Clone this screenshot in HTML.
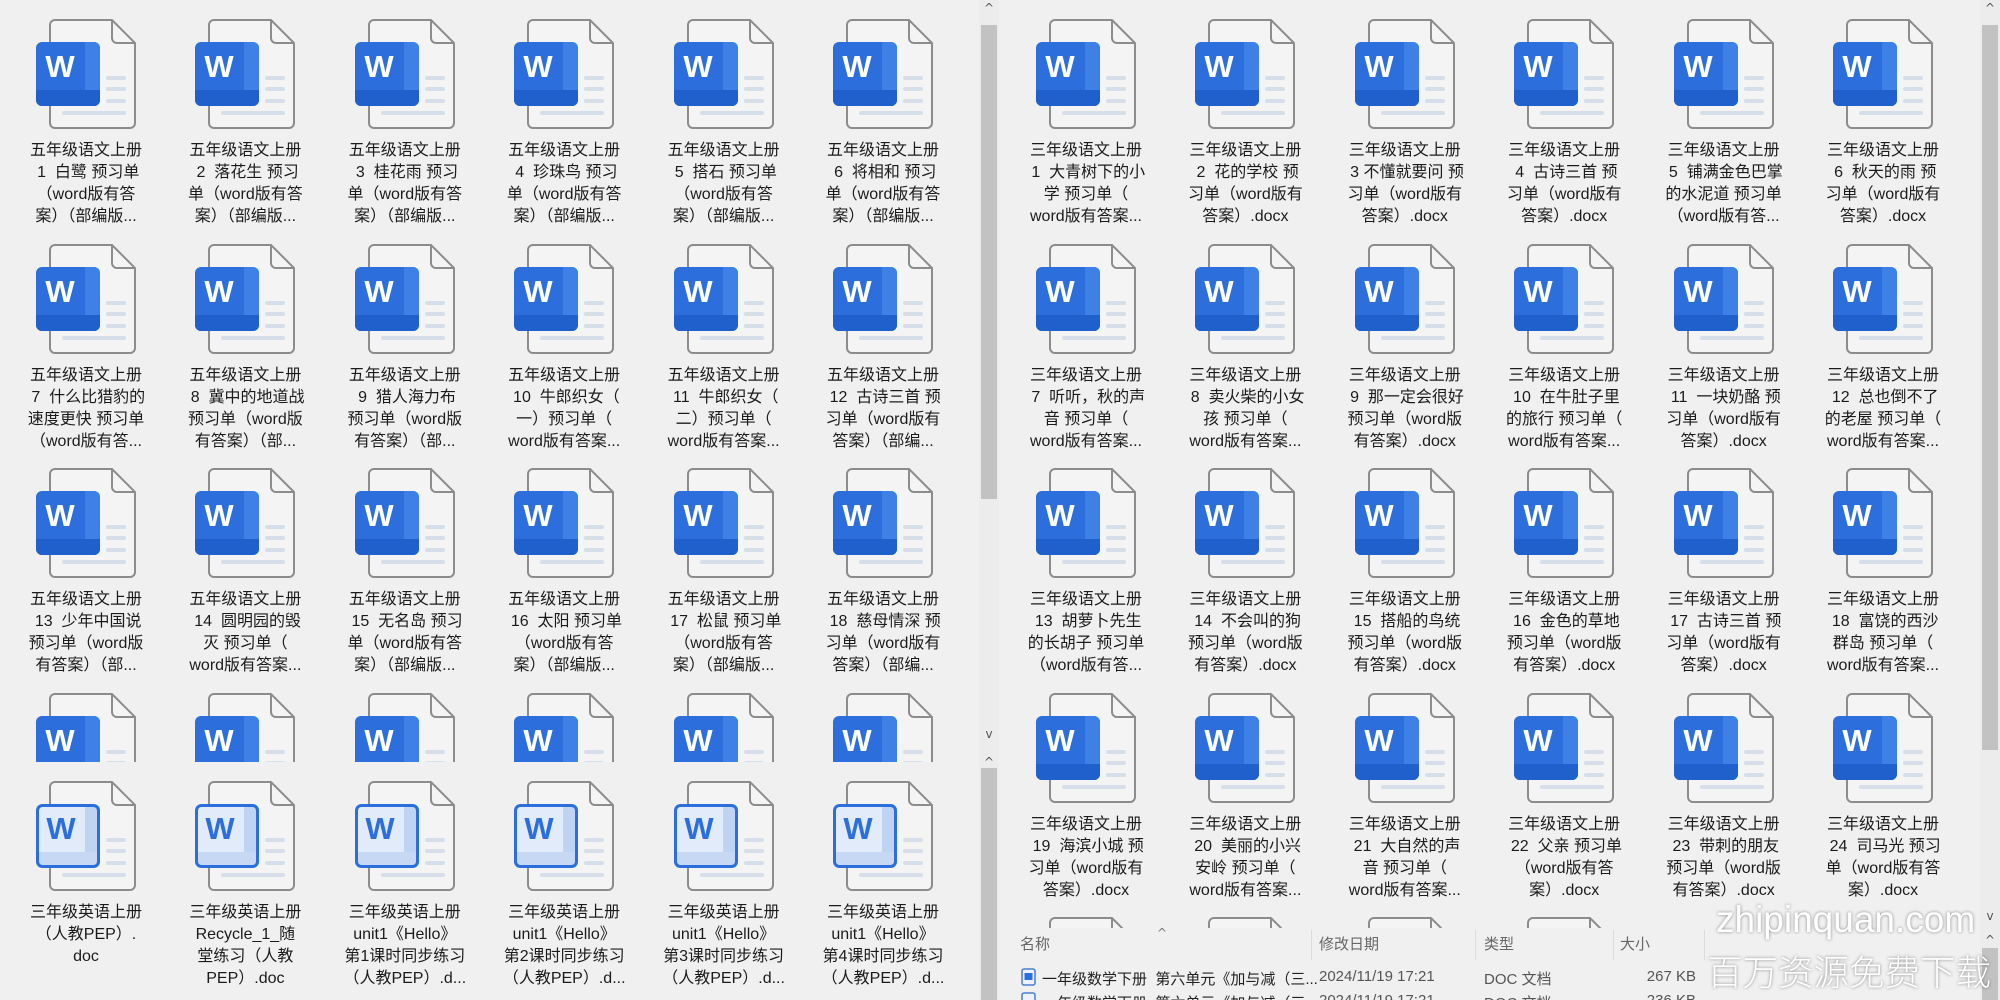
<!DOCTYPE html>
<html><head><meta charset="utf-8">
<style>
*{margin:0;padding:0;box-sizing:border-box}
html,body{width:2000px;height:1000px;overflow:hidden;background:#f0f0f0}
.box{position:absolute;overflow:hidden}
.it{position:absolute;width:150px;height:220px}
.it svg{position:absolute;left:25px;top:0;width:100px;height:110px}
.t{position:absolute;top:121px;left:0;width:150px;text-align:center;font:16px/22px "Liberation Sans","Noto Sans CJK SC",sans-serif;color:#1b1b1b;white-space:nowrap}
.sb{position:absolute;background:#ececec}
.th{position:absolute;background:#c2c2c2}
.ar{position:absolute;font:12px "DejaVu Sans",sans-serif;color:#555;width:20px;text-align:center}
.hd{position:absolute;top:5px;font:15px "Liberation Sans","Noto Sans CJK SC",sans-serif;color:#666}
.dv{position:absolute;top:2px;width:1px;height:30px;background:#dcdcdc}
.rw{position:absolute;font:15px "Liberation Sans","Noto Sans CJK SC",sans-serif;color:#222;white-space:nowrap}
</style></head><body>
<svg width="0" height="0" style="position:absolute">
<defs>
<clipPath id="cb"><rect x="0" y="23" width="64" height="64" rx="6"/></clipPath>
<symbol id="pg" viewBox="0 0 100 110">
<path d="M19 1 H76 L99 24 V104 a5 5 0 0 1 -5 5 H19 a5 5 0 0 1 -5 -5 V6 a5 5 0 0 1 5 -5Z" fill="#f4f4f4" stroke="#8c8c8c" stroke-width="2"/>
<path d="M76 1 V19 a5 5 0 0 0 5 5 H99" fill="none" stroke="#8c8c8c" stroke-width="2"/>
<rect x="70" y="57" width="20" height="4" rx="2" fill="#d6deea"/>
<rect x="70" y="68" width="20" height="4" rx="2" fill="#d6deea"/>
<rect x="70" y="80" width="20" height="4" rx="2" fill="#d6deea"/>
<rect x="26" y="92" width="64" height="4" rx="2" fill="#d6deea"/>
</symbol>
<symbol id="d" viewBox="0 0 100 110">
<use href="#pg"/>
<g clip-path="url(#cb)">
<rect x="0" y="23" width="64" height="64" fill="#2c6fdc"/>
<rect x="49" y="23" width="15" height="64" fill="#3f80e6"/>
<rect x="0" y="71" width="64" height="16" fill="#1f60cc"/>
</g>
</symbol>
<symbol id="l" viewBox="0 0 100 110">
<use href="#pg"/>
<g clip-path="url(#cb)">
<rect x="0" y="23" width="64" height="64" fill="#e1ebf9"/>
<rect x="49" y="23" width="15" height="64" fill="#bfd3f2"/>
<rect x="0" y="71" width="64" height="16" fill="#c6d8f3"/>
</g>
<rect x="1.5" y="24.5" width="61" height="61" rx="5" fill="none" stroke="#2c6fdc" stroke-width="3"/>
</symbol>
</defs></svg>

<!-- LEFT upper -->
<div class="box" style="left:0;top:0;width:979px;height:762px">
<div class="it" style="left:11px;top:19px"><svg viewBox="0 0 100 110"><use href="#d"/><text x="24" y="58" font-family="Liberation Sans" font-weight="bold" font-size="31" fill="#fff" text-anchor="middle">W</text></svg><div class="t">五年级语文上册<br>&nbsp;1&nbsp; 白鹭 预习单<br>（word版有答<br>案）（部编版...</div></div>
<div class="it" style="left:170.4px;top:19px"><svg viewBox="0 0 100 110"><use href="#d"/><text x="24" y="58" font-family="Liberation Sans" font-weight="bold" font-size="31" fill="#fff" text-anchor="middle">W</text></svg><div class="t">五年级语文上册<br>&nbsp;2&nbsp; 落花生 预习<br>单（word版有答<br>案）（部编版...</div></div>
<div class="it" style="left:329.8px;top:19px"><svg viewBox="0 0 100 110"><use href="#d"/><text x="24" y="58" font-family="Liberation Sans" font-weight="bold" font-size="31" fill="#fff" text-anchor="middle">W</text></svg><div class="t">五年级语文上册<br>&nbsp;3&nbsp; 桂花雨 预习<br>单（word版有答<br>案）（部编版...</div></div>
<div class="it" style="left:489.2px;top:19px"><svg viewBox="0 0 100 110"><use href="#d"/><text x="24" y="58" font-family="Liberation Sans" font-weight="bold" font-size="31" fill="#fff" text-anchor="middle">W</text></svg><div class="t">五年级语文上册<br>&nbsp;4&nbsp; 珍珠鸟 预习<br>单（word版有答<br>案）（部编版...</div></div>
<div class="it" style="left:648.6px;top:19px"><svg viewBox="0 0 100 110"><use href="#d"/><text x="24" y="58" font-family="Liberation Sans" font-weight="bold" font-size="31" fill="#fff" text-anchor="middle">W</text></svg><div class="t">五年级语文上册<br>&nbsp;5&nbsp; 搭石 预习单<br>（word版有答<br>案）（部编版...</div></div>
<div class="it" style="left:808px;top:19px"><svg viewBox="0 0 100 110"><use href="#d"/><text x="24" y="58" font-family="Liberation Sans" font-weight="bold" font-size="31" fill="#fff" text-anchor="middle">W</text></svg><div class="t">五年级语文上册<br>&nbsp;6&nbsp; 将相和 预习<br>单（word版有答<br>案）（部编版...</div></div>

<div class="it" style="left:11px;top:243.5px"><svg viewBox="0 0 100 110"><use href="#d"/><text x="24" y="58" font-family="Liberation Sans" font-weight="bold" font-size="31" fill="#fff" text-anchor="middle">W</text></svg><div class="t">五年级语文上册<br>&nbsp;7&nbsp; 什么比猎豹的<br>速度更快 预习单<br>（word版有答...</div></div>
<div class="it" style="left:170.4px;top:243.5px"><svg viewBox="0 0 100 110"><use href="#d"/><text x="24" y="58" font-family="Liberation Sans" font-weight="bold" font-size="31" fill="#fff" text-anchor="middle">W</text></svg><div class="t">五年级语文上册<br>&nbsp;8&nbsp; 冀中的地道战<br>预习单（word版<br>有答案）（部...</div></div>
<div class="it" style="left:329.8px;top:243.5px"><svg viewBox="0 0 100 110"><use href="#d"/><text x="24" y="58" font-family="Liberation Sans" font-weight="bold" font-size="31" fill="#fff" text-anchor="middle">W</text></svg><div class="t">五年级语文上册<br>&nbsp;9&nbsp; 猎人海力布<br>预习单（word版<br>有答案）（部...</div></div>
<div class="it" style="left:489.2px;top:243.5px"><svg viewBox="0 0 100 110"><use href="#d"/><text x="24" y="58" font-family="Liberation Sans" font-weight="bold" font-size="31" fill="#fff" text-anchor="middle">W</text></svg><div class="t">五年级语文上册<br>&nbsp;10&nbsp; 牛郎织女（<br>一）预习单（<br>word版有答案...</div></div>
<div class="it" style="left:648.6px;top:243.5px"><svg viewBox="0 0 100 110"><use href="#d"/><text x="24" y="58" font-family="Liberation Sans" font-weight="bold" font-size="31" fill="#fff" text-anchor="middle">W</text></svg><div class="t">五年级语文上册<br>&nbsp;11&nbsp; 牛郎织女（<br>二）预习单（<br>word版有答案...</div></div>
<div class="it" style="left:808px;top:243.5px"><svg viewBox="0 0 100 110"><use href="#d"/><text x="24" y="58" font-family="Liberation Sans" font-weight="bold" font-size="31" fill="#fff" text-anchor="middle">W</text></svg><div class="t">五年级语文上册<br>&nbsp;12&nbsp; 古诗三首 预<br>习单（word版有<br>答案）（部编...</div></div>

<div class="it" style="left:11px;top:468px"><svg viewBox="0 0 100 110"><use href="#d"/><text x="24" y="58" font-family="Liberation Sans" font-weight="bold" font-size="31" fill="#fff" text-anchor="middle">W</text></svg><div class="t">五年级语文上册<br>&nbsp;13&nbsp; 少年中国说<br>预习单（word版<br>有答案）（部...</div></div>
<div class="it" style="left:170.4px;top:468px"><svg viewBox="0 0 100 110"><use href="#d"/><text x="24" y="58" font-family="Liberation Sans" font-weight="bold" font-size="31" fill="#fff" text-anchor="middle">W</text></svg><div class="t">五年级语文上册<br>&nbsp;14&nbsp; 圆明园的毁<br>灭 预习单（<br>word版有答案...</div></div>
<div class="it" style="left:329.8px;top:468px"><svg viewBox="0 0 100 110"><use href="#d"/><text x="24" y="58" font-family="Liberation Sans" font-weight="bold" font-size="31" fill="#fff" text-anchor="middle">W</text></svg><div class="t">五年级语文上册<br>&nbsp;15&nbsp; 无名岛 预习<br>单（word版有答<br>案）（部编版...</div></div>
<div class="it" style="left:489.2px;top:468px"><svg viewBox="0 0 100 110"><use href="#d"/><text x="24" y="58" font-family="Liberation Sans" font-weight="bold" font-size="31" fill="#fff" text-anchor="middle">W</text></svg><div class="t">五年级语文上册<br>&nbsp;16&nbsp; 太阳 预习单<br>（word版有答<br>案）（部编版...</div></div>
<div class="it" style="left:648.6px;top:468px"><svg viewBox="0 0 100 110"><use href="#d"/><text x="24" y="58" font-family="Liberation Sans" font-weight="bold" font-size="31" fill="#fff" text-anchor="middle">W</text></svg><div class="t">五年级语文上册<br>&nbsp;17&nbsp; 松鼠 预习单<br>（word版有答<br>案）（部编版...</div></div>
<div class="it" style="left:808px;top:468px"><svg viewBox="0 0 100 110"><use href="#d"/><text x="24" y="58" font-family="Liberation Sans" font-weight="bold" font-size="31" fill="#fff" text-anchor="middle">W</text></svg><div class="t">五年级语文上册<br>&nbsp;18&nbsp; 慈母情深 预<br>习单（word版有<br>答案）（部编...</div></div>

<div class="it" style="left:11px;top:692.5px"><svg viewBox="0 0 100 110"><use href="#d"/><text x="24" y="58" font-family="Liberation Sans" font-weight="bold" font-size="31" fill="#fff" text-anchor="middle">W</text></svg></div>
<div class="it" style="left:170.4px;top:692.5px"><svg viewBox="0 0 100 110"><use href="#d"/><text x="24" y="58" font-family="Liberation Sans" font-weight="bold" font-size="31" fill="#fff" text-anchor="middle">W</text></svg></div>
<div class="it" style="left:329.8px;top:692.5px"><svg viewBox="0 0 100 110"><use href="#d"/><text x="24" y="58" font-family="Liberation Sans" font-weight="bold" font-size="31" fill="#fff" text-anchor="middle">W</text></svg></div>
<div class="it" style="left:489.2px;top:692.5px"><svg viewBox="0 0 100 110"><use href="#d"/><text x="24" y="58" font-family="Liberation Sans" font-weight="bold" font-size="31" fill="#fff" text-anchor="middle">W</text></svg></div>
<div class="it" style="left:648.6px;top:692.5px"><svg viewBox="0 0 100 110"><use href="#d"/><text x="24" y="58" font-family="Liberation Sans" font-weight="bold" font-size="31" fill="#fff" text-anchor="middle">W</text></svg></div>
<div class="it" style="left:808px;top:692.5px"><svg viewBox="0 0 100 110"><use href="#d"/><text x="24" y="58" font-family="Liberation Sans" font-weight="bold" font-size="31" fill="#fff" text-anchor="middle">W</text></svg></div>
</div>

<!-- LEFT lower -->
<div class="box" style="left:0;top:765px;width:979px;height:235px">
<div class="it" style="left:11px;top:16px"><svg viewBox="0 0 100 110"><use href="#l"/><text x="25" y="58" font-family="Liberation Sans" font-weight="bold" font-size="31" fill="#2c6fdc" text-anchor="middle">W</text></svg><div class="t">三年级英语上册<br>（人教PEP）.<br>doc</div></div>
<div class="it" style="left:170.4px;top:16px"><svg viewBox="0 0 100 110"><use href="#l"/><text x="25" y="58" font-family="Liberation Sans" font-weight="bold" font-size="31" fill="#2c6fdc" text-anchor="middle">W</text></svg><div class="t">三年级英语上册<br>Recycle_1_随<br>堂练习（人教<br>PEP）.doc</div></div>
<div class="it" style="left:329.8px;top:16px"><svg viewBox="0 0 100 110"><use href="#l"/><text x="25" y="58" font-family="Liberation Sans" font-weight="bold" font-size="31" fill="#2c6fdc" text-anchor="middle">W</text></svg><div class="t">三年级英语上册<br>unit1《Hello》<br>第1课时同步练习<br>（人教PEP）.d...</div></div>
<div class="it" style="left:489.2px;top:16px"><svg viewBox="0 0 100 110"><use href="#l"/><text x="25" y="58" font-family="Liberation Sans" font-weight="bold" font-size="31" fill="#2c6fdc" text-anchor="middle">W</text></svg><div class="t">三年级英语上册<br>unit1《Hello》<br>第2课时同步练习<br>（人教PEP）.d...</div></div>
<div class="it" style="left:648.6px;top:16px"><svg viewBox="0 0 100 110"><use href="#l"/><text x="25" y="58" font-family="Liberation Sans" font-weight="bold" font-size="31" fill="#2c6fdc" text-anchor="middle">W</text></svg><div class="t">三年级英语上册<br>unit1《Hello》<br>第3课时同步练习<br>（人教PEP）.d...</div></div>
<div class="it" style="left:808px;top:16px"><svg viewBox="0 0 100 110"><use href="#l"/><text x="25" y="58" font-family="Liberation Sans" font-weight="bold" font-size="31" fill="#2c6fdc" text-anchor="middle">W</text></svg><div class="t">三年级英语上册<br>unit1《Hello》<br>第4课时同步练习<br>（人教PEP）.d...</div></div>
</div>

<!-- left scrollbar -->
<div class="sb" style="left:979px;top:0;width:20px;height:1000px"></div>
<div class="ar" style="left:979px;top:1px">^</div>
<div class="th" style="left:981px;top:25px;width:16px;height:474px"></div>
<div class="ar" style="left:979px;top:727px">v</div>
<div class="ar" style="left:979px;top:755px">^</div>
<div class="th" style="left:981px;top:768px;width:16px;height:232px"></div>

<!-- RIGHT upper -->
<div class="box" style="left:1000px;top:0;width:979px;height:928px">
<div class="it" style="left:11px;top:19px"><svg viewBox="0 0 100 110"><use href="#d"/><text x="24" y="58" font-family="Liberation Sans" font-weight="bold" font-size="31" fill="#fff" text-anchor="middle">W</text></svg><div class="t">三年级语文上册<br>&nbsp;1&nbsp; 大青树下的小<br>学 预习单（<br>word版有答案...</div></div>
<div class="it" style="left:170.4px;top:19px"><svg viewBox="0 0 100 110"><use href="#d"/><text x="24" y="58" font-family="Liberation Sans" font-weight="bold" font-size="31" fill="#fff" text-anchor="middle">W</text></svg><div class="t">三年级语文上册<br>&nbsp;2&nbsp; 花的学校 预<br>习单（word版有<br>答案）.docx</div></div>
<div class="it" style="left:329.8px;top:19px"><svg viewBox="0 0 100 110"><use href="#d"/><text x="24" y="58" font-family="Liberation Sans" font-weight="bold" font-size="31" fill="#fff" text-anchor="middle">W</text></svg><div class="t">三年级语文上册<br>&nbsp;3 不懂就要问 预<br>习单（word版有<br>答案）.docx</div></div>
<div class="it" style="left:489.2px;top:19px"><svg viewBox="0 0 100 110"><use href="#d"/><text x="24" y="58" font-family="Liberation Sans" font-weight="bold" font-size="31" fill="#fff" text-anchor="middle">W</text></svg><div class="t">三年级语文上册<br>&nbsp;4&nbsp; 古诗三首 预<br>习单（word版有<br>答案）.docx</div></div>
<div class="it" style="left:648.6px;top:19px"><svg viewBox="0 0 100 110"><use href="#d"/><text x="24" y="58" font-family="Liberation Sans" font-weight="bold" font-size="31" fill="#fff" text-anchor="middle">W</text></svg><div class="t">三年级语文上册<br>&nbsp;5&nbsp; 铺满金色巴掌<br>的水泥道 预习单<br>（word版有答...</div></div>
<div class="it" style="left:808px;top:19px"><svg viewBox="0 0 100 110"><use href="#d"/><text x="24" y="58" font-family="Liberation Sans" font-weight="bold" font-size="31" fill="#fff" text-anchor="middle">W</text></svg><div class="t">三年级语文上册<br>&nbsp;6&nbsp; 秋天的雨 预<br>习单（word版有<br>答案）.docx</div></div>

<div class="it" style="left:11px;top:243.5px"><svg viewBox="0 0 100 110"><use href="#d"/><text x="24" y="58" font-family="Liberation Sans" font-weight="bold" font-size="31" fill="#fff" text-anchor="middle">W</text></svg><div class="t">三年级语文上册<br>&nbsp;7&nbsp; 听听，秋的声<br>音 预习单（<br>word版有答案...</div></div>
<div class="it" style="left:170.4px;top:243.5px"><svg viewBox="0 0 100 110"><use href="#d"/><text x="24" y="58" font-family="Liberation Sans" font-weight="bold" font-size="31" fill="#fff" text-anchor="middle">W</text></svg><div class="t">三年级语文上册<br>&nbsp;8&nbsp; 卖火柴的小女<br>孩 预习单（<br>word版有答案...</div></div>
<div class="it" style="left:329.8px;top:243.5px"><svg viewBox="0 0 100 110"><use href="#d"/><text x="24" y="58" font-family="Liberation Sans" font-weight="bold" font-size="31" fill="#fff" text-anchor="middle">W</text></svg><div class="t">三年级语文上册<br>&nbsp;9&nbsp; 那一定会很好<br>预习单（word版<br>有答案）.docx</div></div>
<div class="it" style="left:489.2px;top:243.5px"><svg viewBox="0 0 100 110"><use href="#d"/><text x="24" y="58" font-family="Liberation Sans" font-weight="bold" font-size="31" fill="#fff" text-anchor="middle">W</text></svg><div class="t">三年级语文上册<br>&nbsp;10&nbsp; 在牛肚子里<br>的旅行 预习单（<br>word版有答案...</div></div>
<div class="it" style="left:648.6px;top:243.5px"><svg viewBox="0 0 100 110"><use href="#d"/><text x="24" y="58" font-family="Liberation Sans" font-weight="bold" font-size="31" fill="#fff" text-anchor="middle">W</text></svg><div class="t">三年级语文上册<br>&nbsp;11&nbsp; 一块奶酪 预<br>习单（word版有<br>答案）.docx</div></div>
<div class="it" style="left:808px;top:243.5px"><svg viewBox="0 0 100 110"><use href="#d"/><text x="24" y="58" font-family="Liberation Sans" font-weight="bold" font-size="31" fill="#fff" text-anchor="middle">W</text></svg><div class="t">三年级语文上册<br>&nbsp;12&nbsp; 总也倒不了<br>的老屋 预习单（<br>word版有答案...</div></div>

<div class="it" style="left:11px;top:468px"><svg viewBox="0 0 100 110"><use href="#d"/><text x="24" y="58" font-family="Liberation Sans" font-weight="bold" font-size="31" fill="#fff" text-anchor="middle">W</text></svg><div class="t">三年级语文上册<br>&nbsp;13&nbsp; 胡萝卜先生<br>的长胡子 预习单<br>（word版有答...</div></div>
<div class="it" style="left:170.4px;top:468px"><svg viewBox="0 0 100 110"><use href="#d"/><text x="24" y="58" font-family="Liberation Sans" font-weight="bold" font-size="31" fill="#fff" text-anchor="middle">W</text></svg><div class="t">三年级语文上册<br>&nbsp;14&nbsp; 不会叫的狗<br>预习单（word版<br>有答案）.docx</div></div>
<div class="it" style="left:329.8px;top:468px"><svg viewBox="0 0 100 110"><use href="#d"/><text x="24" y="58" font-family="Liberation Sans" font-weight="bold" font-size="31" fill="#fff" text-anchor="middle">W</text></svg><div class="t">三年级语文上册<br>&nbsp;15&nbsp; 搭船的鸟统<br>预习单（word版<br>有答案）.docx</div></div>
<div class="it" style="left:489.2px;top:468px"><svg viewBox="0 0 100 110"><use href="#d"/><text x="24" y="58" font-family="Liberation Sans" font-weight="bold" font-size="31" fill="#fff" text-anchor="middle">W</text></svg><div class="t">三年级语文上册<br>&nbsp;16&nbsp; 金色的草地<br>预习单（word版<br>有答案）.docx</div></div>
<div class="it" style="left:648.6px;top:468px"><svg viewBox="0 0 100 110"><use href="#d"/><text x="24" y="58" font-family="Liberation Sans" font-weight="bold" font-size="31" fill="#fff" text-anchor="middle">W</text></svg><div class="t">三年级语文上册<br>&nbsp;17&nbsp; 古诗三首 预<br>习单（word版有<br>答案）.docx</div></div>
<div class="it" style="left:808px;top:468px"><svg viewBox="0 0 100 110"><use href="#d"/><text x="24" y="58" font-family="Liberation Sans" font-weight="bold" font-size="31" fill="#fff" text-anchor="middle">W</text></svg><div class="t">三年级语文上册<br>&nbsp;18&nbsp; 富饶的西沙<br>群岛 预习单（<br>word版有答案...</div></div>

<div class="it" style="left:11px;top:692.5px"><svg viewBox="0 0 100 110"><use href="#d"/><text x="24" y="58" font-family="Liberation Sans" font-weight="bold" font-size="31" fill="#fff" text-anchor="middle">W</text></svg><div class="t">三年级语文上册<br>&nbsp;19&nbsp; 海滨小城 预<br>习单（word版有<br>答案）.docx</div></div>
<div class="it" style="left:170.4px;top:692.5px"><svg viewBox="0 0 100 110"><use href="#d"/><text x="24" y="58" font-family="Liberation Sans" font-weight="bold" font-size="31" fill="#fff" text-anchor="middle">W</text></svg><div class="t">三年级语文上册<br>&nbsp;20&nbsp; 美丽的小兴<br>安岭 预习单（<br>word版有答案...</div></div>
<div class="it" style="left:329.8px;top:692.5px"><svg viewBox="0 0 100 110"><use href="#d"/><text x="24" y="58" font-family="Liberation Sans" font-weight="bold" font-size="31" fill="#fff" text-anchor="middle">W</text></svg><div class="t">三年级语文上册<br>&nbsp;21&nbsp; 大自然的声<br>音 预习单（<br>word版有答案...</div></div>
<div class="it" style="left:489.2px;top:692.5px"><svg viewBox="0 0 100 110"><use href="#d"/><text x="24" y="58" font-family="Liberation Sans" font-weight="bold" font-size="31" fill="#fff" text-anchor="middle">W</text></svg><div class="t">三年级语文上册<br>&nbsp;22&nbsp; 父亲 预习单<br>（word版有答<br>案）.docx</div></div>
<div class="it" style="left:648.6px;top:692.5px"><svg viewBox="0 0 100 110"><use href="#d"/><text x="24" y="58" font-family="Liberation Sans" font-weight="bold" font-size="31" fill="#fff" text-anchor="middle">W</text></svg><div class="t">三年级语文上册<br>&nbsp;23&nbsp; 带刺的朋友<br>预习单（word版<br>有答案）.docx</div></div>
<div class="it" style="left:808px;top:692.5px"><svg viewBox="0 0 100 110"><use href="#d"/><text x="24" y="58" font-family="Liberation Sans" font-weight="bold" font-size="31" fill="#fff" text-anchor="middle">W</text></svg><div class="t">三年级语文上册<br>&nbsp;24&nbsp; 司马光 预习<br>单（word版有答<br>案）.docx</div></div>

<div class="it" style="left:11px;top:917px"><svg viewBox="0 0 100 110"><use href="#pg"/></svg></div>
<div class="it" style="left:170.4px;top:917px"><svg viewBox="0 0 100 110"><use href="#pg"/></svg></div>
<div class="it" style="left:329.8px;top:917px"><svg viewBox="0 0 100 110"><use href="#pg"/></svg></div>
<div class="it" style="left:489.2px;top:917px"><svg viewBox="0 0 100 110"><use href="#pg"/></svg></div>
</div>

<!-- detail list -->
<div class="box" style="left:1000px;top:928px;width:979px;height:72px">
<div class="ar" style="left:152px;top:-2px;color:#777">^</div>
<div class="hd" style="left:20px">名称</div>
<div class="dv" style="left:311px"></div>
<div class="hd" style="left:319px">修改日期</div>
<div class="dv" style="left:475px"></div>
<div class="hd" style="left:484px">类型</div>
<div class="dv" style="left:613px"></div>
<div class="hd" style="left:620px">大小</div>
<div class="dv" style="left:704px"></div>
<svg style="position:absolute;left:21px;top:40px" width="16" height="18" viewBox="0 0 16 18"><rect x="1" y="1" width="13" height="16" rx="2" fill="#eef3fb" stroke="#4a7fd0" stroke-width="1.5"/><rect x="3.5" y="5" width="8" height="7" fill="#2c6fdc"/></svg>
<div class="rw" style="left:42px;top:40px">一年级数学下册&nbsp; 第六单元《加与减（三...</div>
<div class="rw" style="left:319px;top:40px;color:#555">2024/11/19 17:21</div>
<div class="rw" style="left:484px;top:40px;color:#555">DOC 文档</div>
<div class="rw" style="left:620px;top:40px;width:76px;text-align:right;color:#555">267 KB</div>
<svg style="position:absolute;left:21px;top:64px" width="16" height="18" viewBox="0 0 16 18"><rect x="1" y="1" width="13" height="16" rx="2" fill="#eef3fb" stroke="#4a7fd0" stroke-width="1.5"/></svg>
<div class="rw" style="left:42px;top:64px">一年级数学下册&nbsp; 第六单元《加与减（三...</div>
<div class="rw" style="left:319px;top:64px;color:#555">2024/11/19 17:21</div>
<div class="rw" style="left:484px;top:64px;color:#555">DOC 文档</div>
<div class="rw" style="left:620px;top:64px;width:76px;text-align:right;color:#555">236 KB</div>
</div>

<!-- right scrollbar -->
<div class="sb" style="left:1980px;top:0;width:20px;height:1000px"></div>
<div class="ar" style="left:1980px;top:1px">^</div>
<div class="th" style="left:1982px;top:25px;width:16px;height:725px"></div>
<div class="ar" style="left:1980px;top:909px">v</div>
<div class="ar" style="left:1980px;top:933px">^</div>
<div class="th" style="left:1982px;top:948px;width:16px;height:52px"></div>

<!-- watermark -->
<div class="box" style="left:1690px;top:880px;width:310px;height:120px">
<div style="position:absolute;left:26px;top:21px;font:37px/1 'Liberation Sans',sans-serif;color:#fff;text-shadow:0 0 3px rgba(0,0,0,.45);white-space:nowrap">zhipinquan.com</div>
<div style="position:absolute;left:17px;top:70px;font:300 35.5px/1.2 'Noto Sans CJK SC',sans-serif;color:#fff;text-shadow:0 0 3px rgba(0,0,0,.45);white-space:nowrap">百万资源免费下载</div>
</div>
</body></html>
